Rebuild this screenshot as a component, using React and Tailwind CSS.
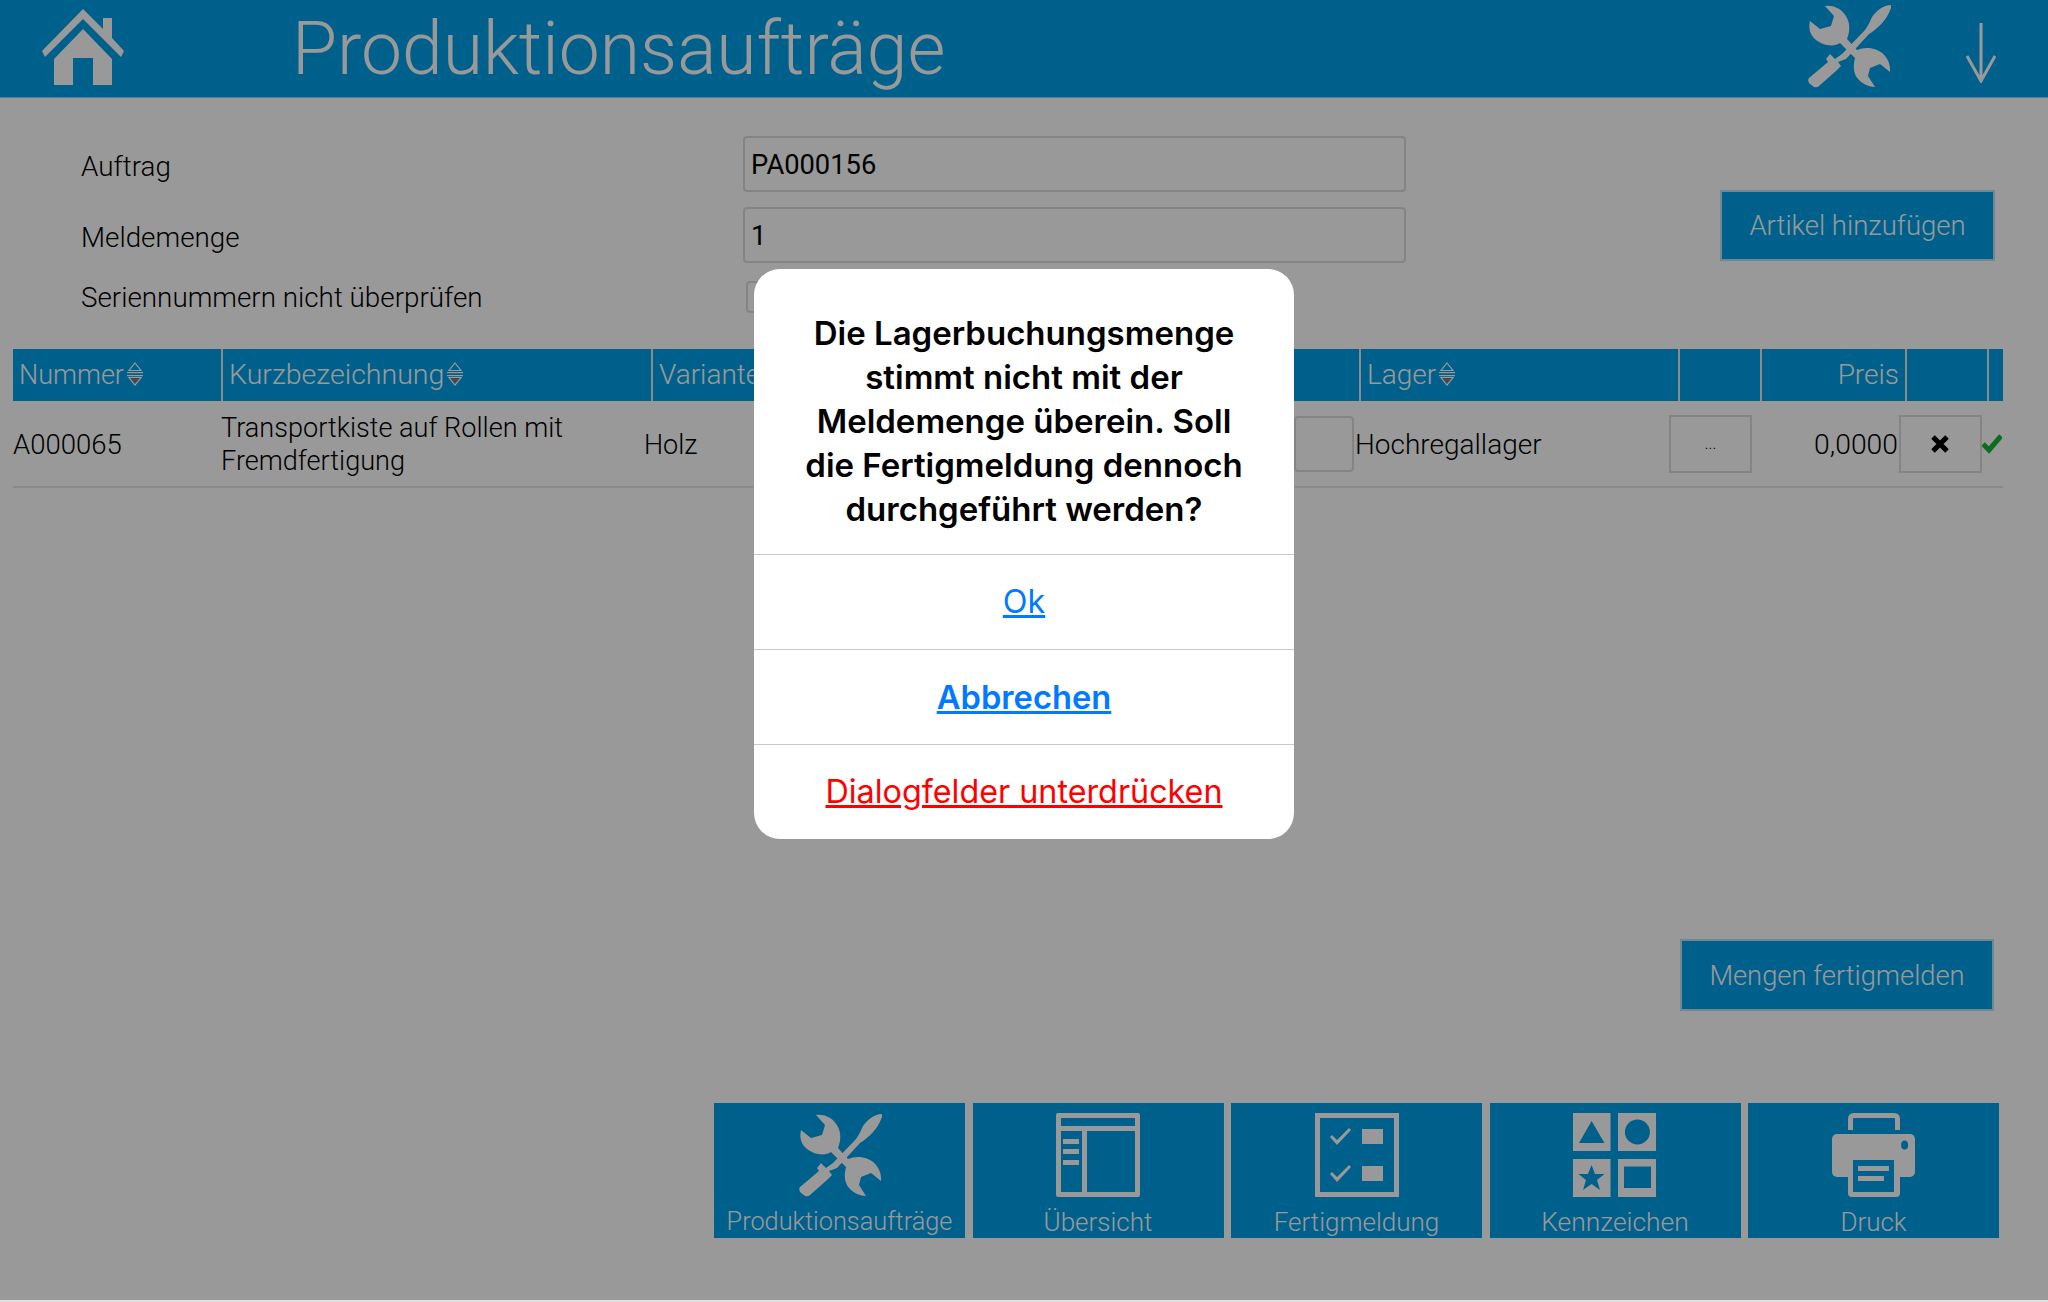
const ToolsIcon = ({ className }) => (
  <svg viewBox="0 0 84 84" className={className} fill="currentColor">
    <path d="M84 1 C77 1 68 7 64 15 C62 20 60 23 58 26 L35 50 L28 55 L23 50 L19 55 L21 58 L2 74 Q0 77 3 80 L7 83 Q10 84 12 82 L29 67 L34 62 L31 58 L39 55 L62 30 C70 25 80 16 84 4 Z" />
    <path d="M18 2 L27 12 L24 22 L13 25 L3 17 C0 30 8 38 20 41 C26 42 30 41 33 39 L48 54 C46 62 46 70 52 76 C56 80 62 83 68 83 L61 72 L63 64 L73 60 L83 68 C84 58 78 49 70 46 C62 43 56 44 50 46 L40 35 C42 30 44 22 40 14 C36 6 28 1 18 2 Z" />
  </svg>
);

const HomeIcon = ({ className }) => (
  <svg viewBox="0 0 82 76" className={className} fill="currentColor">
    <path d="M41 0 L61 20 V9 H70 V29 L82 42 L79 48 L41 10 L3 48 L0 42 Z" />
    <path d="M41 20 L70 50 V76 H51 V49 H31 V76 H12 V50 Z" />
  </svg>
);

const OverviewIcon = ({ className }) => (
  <svg viewBox="0 0 84 84" className={className} fill="currentColor">
    <path fillRule="evenodd" d="M2 0 H82 Q84 0 84 2 V82 Q84 84 82 84 H2 Q0 84 0 82 V2 Q0 0 2 0 Z M5 5 V13 H79 V5 Z M5 18 V79 H26 V18 Z M31 18 V79 H79 V18 Z" />
    <rect x="7" y="26" width="16" height="5" />
    <rect x="7" y="36" width="16" height="5" />
    <rect x="7" y="47" width="16" height="5" />
  </svg>
);

const ChecklistIcon = ({ className }) => (
  <svg viewBox="0 0 84 84" className={className} fill="currentColor">
    <path fillRule="evenodd" d="M0 0 H84 V84 H0 Z M5 5 V79 H79 V5 Z" />
    <rect x="47" y="16" width="21" height="15" />
    <rect x="47" y="53" width="21" height="15" />
    <path d="M15 24 L17 22 L22 27 L34 15 L36 17 L22 32 Z" />
    <path d="M15 61 L17 59 L22 64 L34 52 L36 54 L22 69 Z" />
  </svg>
);

const TagsIcon = ({ className }) => (
  <svg viewBox="0 0 84 84" className={className}>
    <rect x="0" y="0" width="37.5" height="38" fill="currentColor" />
    <rect x="45" y="0" width="38" height="38" fill="currentColor" />
    <rect x="0" y="46" width="37.5" height="38" fill="currentColor" />
    <rect x="45" y="46" width="38" height="38" fill="currentColor" />
    <path d="M18.6 8 L31.5 30 H6 Z" fill="#00a0e9" />
    <circle cx="64.4" cy="19" r="12.5" fill="#00a0e9" />
    <path d="M18.6 52 L22 61 L31.5 61 L24 67 L27 77 L18.6 71 L10 77 L13 67 L5.5 61 L15 61 Z" fill="#00a0e9" />
    <rect x="51" y="53.5" width="27" height="21.5" fill="#00a0e9" />
  </svg>
);

const PrinterIcon = ({ className }) => (
  <svg viewBox="0 0 84 84" className={className}>
    <path d="M18.5 17 V6 Q18.5 2.5 22 2.5 H62 Q65.5 2.5 65.5 6 V17" fill="none" stroke="currentColor" strokeWidth="5" />
    <rect x="0" y="21" width="83" height="43" rx="5" fill="currentColor" />
    <rect x="16" y="44" width="52" height="40" rx="4" fill="currentColor" />
    <rect x="21" y="47" width="41" height="32" fill="#00a0e9" />
    <rect x="26" y="53" width="31" height="5" fill="currentColor" />
    <rect x="26" y="63" width="26" height="5" fill="currentColor" />
    <ellipse cx="72.6" cy="32" rx="3.5" ry="4.5" fill="#00a0e9" />
  </svg>
);

const SortIcon = () => (
  <svg viewBox="0 0 18 24" className="w-[18px] h-[24px] shrink-0 ml-[2px] -mt-[2px]">
    <path d="M9 1 L15 8.5 H3 Z" fill="#00a0e9" stroke="#ffffff" strokeWidth="1.2" />
    <rect x="1" y="10" width="16" height="1.2" fill="#ffffff" />
    <rect x="1" y="13" width="16" height="1.2" fill="#ffffff" />
    <path d="M3 15.5 H15 L9 23 Z" fill="#77777f" stroke="#ffffff" strokeWidth="1.2" />
  </svg>
);

const HeadCell = ({ children, sort, right, size = 'text-[28px]' }) => (
  <div className={`h-full border-l-2 border-[#e8e8e8] first:border-l-0 flex items-center px-[6px] ${size} ${right ? 'justify-end' : ''}`}>
    {children && <span>{children}</span>}
    {sort && <SortIcon />}
  </div>
);

const tiles = [
  { label: 'Produktionsaufträge', Icon: ToolsIcon, size: 'text-[25.3px]' },
  { label: 'Übersicht', Icon: OverviewIcon, size: 'text-[26px]' },
  { label: 'Fertigmeldung', Icon: ChecklistIcon, size: 'text-[26px]' },
  { label: 'Kennzeichen', Icon: TagsIcon, size: 'text-[26.4px]' },
  { label: 'Druck', Icon: PrinterIcon, size: 'text-[26px]' },
];

const App = () => {
  return (
    <div className="relative h-[1302px] w-[2048px] overflow-hidden bg-white text-[27px] text-black font-['Liberation_Sans',sans-serif] border-b-2 border-[#e0e0e0]">
      <header className="h-[98px] bg-[#00a0e9] border-b border-[#8fd0ee] flex items-center text-white">
        <HomeIcon className="w-[82px] h-[76px] ml-[42px] -mt-[4px]" />
        <h1 className="ml-[168px] pt-[3px] text-[73.2px] leading-none font-['Roboto',sans-serif] font-light">Produktionsaufträge</h1>
        <ToolsIcon className="w-[84px] h-[84px] ml-auto -mt-[6px] -translate-x-px" />
        <svg viewBox="0 0 30 60" className="w-[30px] h-[60px] ml-[74px] mr-[52px] mt-[8px]" fill="none" stroke="currentColor" strokeWidth="3">
          <path d="M15 0 V58 M1 33 L15 58 L29 33" />
        </svg>
      </header>

      <section className="h-[251px] flex justify-between pl-[81px] pr-[53px] pt-[38px] font-['Roboto',sans-serif] font-light">
        <div className="flex flex-col gap-[15px]">
          <div className="flex items-center">
            <label className="w-[662px] text-[27.8px] pt-[5px]">Auftrag</label>
            <div className="w-[663px] h-[56px] border-2 border-[#dcdcdc] rounded-[4px] px-[6px] pt-[2px] flex items-center font-normal text-[27.3px]">PA000156</div>
          </div>
          <div className="flex items-center">
            <label className="w-[662px] text-[27.8px] pt-[6px]">Meldemenge</label>
            <div className="w-[663px] h-[56px] border-2 border-[#dcdcdc] rounded-[4px] px-[6px] pt-[2px] flex items-center font-normal text-[27.3px]">1</div>
          </div>
          <div className="flex items-center -mt-[3px]">
            <label className="w-[665px] text-[27.8px] pt-[2px]">Seriennummern nicht überprüfen</label>
            <div className="w-[32px] h-[32px] border-2 border-[#dcdcdc] rounded-[4px]" />
          </div>
        </div>
        <button className="mt-[54px] w-[275px] h-[71px] bg-[#00a0e9] border-2 border-[#b8e3f7] text-white text-[27.5px]">Artikel hinzufügen</button>
      </section>

      <div className="ml-[13px] w-[1990px] font-['Roboto',sans-serif] font-light">
        <div className="h-[52px] bg-[#00a0e9] text-white grid grid-cols-[208px_430px_708px_319px_82px_145px_82px_16px]">
          <HeadCell sort size="text-[27px]">Nummer</HeadCell>
          <HeadCell sort size="text-[28.5px]">Kurzbezeichnung</HeadCell>
          <HeadCell>Variante</HeadCell>
          <HeadCell sort>Lager</HeadCell>
          <HeadCell />
          <HeadCell right>Preis</HeadCell>
          <HeadCell />
          <HeadCell />
        </div>
        <div className="h-[87px] border-b-2 border-[#e6e6e6] grid grid-cols-[208px_423px_711px_314px_83px_147px_83px_21px] items-center">
          <div className="pt-[3px] text-[27.5px]">A000065</div>
          <div className="leading-[33px] pt-[2px] text-[27.1px]">Transportkiste auf Rollen mit<br />Fremdfertigung</div>
          <div className="flex items-center justify-between pr-[1px]">
            <span className="pt-[3px]">Holz</span>
            <div className="w-[60px] h-[56px] border-2 border-[#dcdcdc] rounded-[4px]" />
          </div>
          <div className="pt-[3px] text-[28px]">Hochregallager</div>
          <div className="h-[58px] border-2 border-[#dcdcdc] flex items-center justify-center text-[16px]">...</div>
          <div className="text-right pr-[1px] pt-[3px] text-[28.3px]">0,0000</div>
          <div className="h-[58px] border-2 border-[#dcdcdc] flex items-center justify-center pr-[2px]">
            <svg viewBox="0 0 20 20" className="w-[20px] h-[20px]" fill="none" stroke="#000" strokeWidth="5">
              <path d="M3 3 L17 17 M17 3 L3 17" />
            </svg>
          </div>
          <div className="flex">
            <svg viewBox="0 0 20 20" className="w-[20px] h-[20px]" fill="none" stroke="#11b732" strokeWidth="5">
              <path d="M1 10 L7 16 L19 2" />
            </svg>
          </div>
        </div>
      </div>

      <div className="flex justify-end mt-[451px] pr-[54px] font-['Roboto',sans-serif] font-light">
        <button className="w-[314px] h-[72px] bg-[#00a0e9] border-2 border-[#b8e3f7] text-white text-[27.3px] pt-[2px]">Mengen fertigmelden</button>
      </div>

      <div className="flex justify-end gap-[7.5px] mt-[92px] pr-[49px] font-['Roboto',sans-serif] font-light">
        {tiles.map(({ label, Icon, size }) => (
          <div key={label} className="w-[251px] h-[135px] bg-[#00a0e9] text-white flex flex-col items-center pt-[10px]">
            <Icon className="w-[84px] h-[84px]" />
            <div className={`mt-[10px] leading-[30px] ${size}`}>{label}</div>
          </div>
        ))}
      </div>

      <div className="absolute inset-0 bg-black/40 flex justify-center pt-[269px]">
        <div className="w-[540px] h-[570px] bg-white rounded-[26px] font-['Inter',sans-serif] text-[32.3px] text-center flex flex-col">
          <div className="h-[285px] pt-[42px] text-[33px] leading-[44px] font-semibold">
            Die Lagerbuchungsmenge<br />stimmt nicht mit der<br />Meldemenge überein. Soll<br />die Fertigmeldung dennoch<br />durchgeführt werden?
          </div>
          <a className="h-[95px] pt-[1px] border-t border-[#c9c9c9] flex items-center justify-center text-[#007aff] underline">Ok</a>
          <a className="h-[95px] pt-[1px] border-t border-[#c9c9c9] flex items-center justify-center text-[#007aff] underline font-semibold text-[32.7px]">Abbrechen</a>
          <a className="h-[95px] pt-[1px] border-t border-[#c9c9c9] flex items-center justify-center text-[#ff0000] underline">Dialogfelder unterdrücken</a>
        </div>
      </div>
    </div>
  );
};

export default App;
